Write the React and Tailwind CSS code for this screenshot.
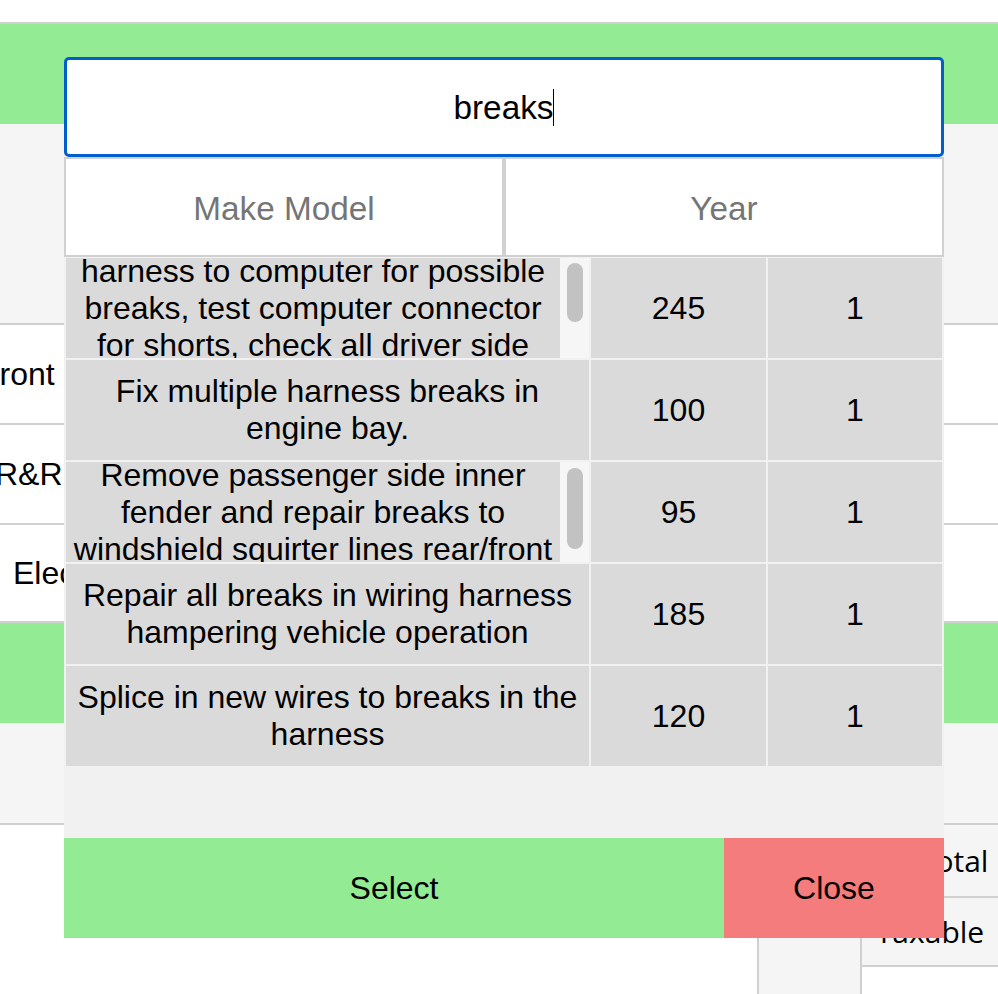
import React from "react";

const sans = "font-['Liberation_Sans',Arial,Helvetica,sans-serif]";

const rows = [
  {
    lines: ["harness to computer for possible", "breaks, test computer connector", "for shorts, check all driver side"],
    price: 245,
    qty: 1,
    thumb: "mt-[5px] h-[59px]",
  },
  { lines: ["Fix multiple harness breaks in", "engine bay."], price: 100, qty: 1 },
  {
    lines: ["Remove passenger side inner", "fender and repair breaks to", "windshield squirter lines rear/front"],
    price: 95,
    qty: 1,
    thumb: "mt-[6px] h-[81px]",
  },
  { lines: ["Repair all breaks in wiring harness", "hampering vehicle operation"], price: 185, qty: 1 },
  { lines: ["Splice in new wires to breaks in the", "harness"], price: 120, qty: 1 },
];

function LaborRow({ row }) {
  return (
    <>
      <div className="h-[100px] bg-[#dadada] flex overflow-hidden">
        <div className="flex-1 overflow-hidden flex flex-col justify-center items-center text-center leading-[37px]">
          {row.lines.map((l, i) => (
            <div key={i} className="whitespace-nowrap">{l}</div>
          ))}
        </div>
        {/* scrollbar for long descriptions */}
        {row.thumb && (
          <div className="w-[29px] shrink-0 bg-[#f6f6f6] flex justify-center">
            <div className={`w-[16px] rounded-full bg-[#c2c2c2] ${row.thumb}`} />
          </div>
        )}
      </div>
      <div className="h-[100px] bg-[#dadada] flex items-center justify-center">{row.price}</div>
      <div className="h-[100px] bg-[#dadada] flex items-center justify-center">{row.qty}</div>
    </>
  );
}

export default function App() {
  return (
    <div className={`relative h-[994px] overflow-hidden bg-white text-black ${sans} text-[32px]`}>
      {/* ---------- page behind the modal ---------- */}
      <div className="flex flex-col h-full">
        <div className="h-[22px] shrink-0" />
        <div className="h-[2px] shrink-0 bg-[#d0d0d0]" />
        <div className="h-[100px] shrink-0 bg-[#93eb93]" />
        <div className="h-[201px] shrink-0 bg-[#f5f5f5] border-b-2 border-[#d0d0d0]" />
        <div className="h-[100px] shrink-0 border-b-2 border-[#d0d0d0] flex items-center">
          <span className="-ml-[20px] whitespace-nowrap">Front</span>
        </div>
        <div className="h-[100px] shrink-0 border-b-2 border-[#d0d0d0] flex items-center">
          <span className="-ml-[5px] whitespace-nowrap">R&amp;R</span>
        </div>
        <div className="h-[98px] shrink-0 border-b-2 border-[#d0d0d0] flex items-center">
          <span className="ml-[13px] whitespace-nowrap">Electrical</span>
        </div>
        <div className="h-[100px] shrink-0 bg-[#93eb93]" />
        <div className="h-[102px] shrink-0 bg-[#f5f5f5] border-b-2 border-[#d0d0d0]" />
        <div className="flex-1 flex justify-end">
          <div className="w-[103px] border-l-2 border-[#d0d0d0] bg-[#f5f5f5]" />
          <div className="w-[138px] border-l-2 border-[#d0d0d0] flex flex-col font-['Open_Sans',sans-serif] text-[30px]">
            <div className="h-[73px] shrink-0 bg-[#f5f5f5] border-b-2 border-[#d0d0d0] flex items-center justify-center">Subtotal</div>
            <div className="h-[69px] shrink-0 bg-[#f5f5f5] border-b-2 border-[#d0d0d0] flex items-center justify-center">Taxable</div>
            <div className="h-[72px] shrink-0 flex items-center justify-center whitespace-nowrap">Tax Rate</div>
          </div>
        </div>
      </div>

      {/* ---------- labor search modal ---------- */}
      <div className="absolute left-[64px] top-[57px] w-[880px] flex flex-col">
        <div className="h-[100px] bg-white border-[3px] border-[#005fcc] rounded-[5px] flex items-center justify-center text-[33.3px] pt-px">
          <span>breaks</span>
          <span className="w-px h-[37px] bg-black" />
        </div>
        <div className="grid grid-cols-2 h-[100px] text-[33.3px] text-[#757575]">
          <div className="bg-white border-2 border-[#d0d0d0] flex items-center justify-center pt-[3px]">Make Model</div>
          <div className="bg-white border-2 border-[#d0d0d0] flex items-center justify-center pt-[3px]">Year</div>
        </div>
        <div className="h-[581px] bg-[#f1f1f1] pt-px px-[2px]">
          <div className="grid grid-cols-[523px_175px_174px] gap-[2px]">
            {rows.map((r, i) => (
              <LaborRow key={i} row={r} />
            ))}
          </div>
        </div>
        <div className="flex h-[100px]">
          <button className="w-[660px] bg-[#93eb93] flex items-center justify-center">Select</button>
          <button className="w-[220px] bg-[#f47c7c] flex items-center justify-center">Close</button>
        </div>
      </div>
    </div>
  );
}
